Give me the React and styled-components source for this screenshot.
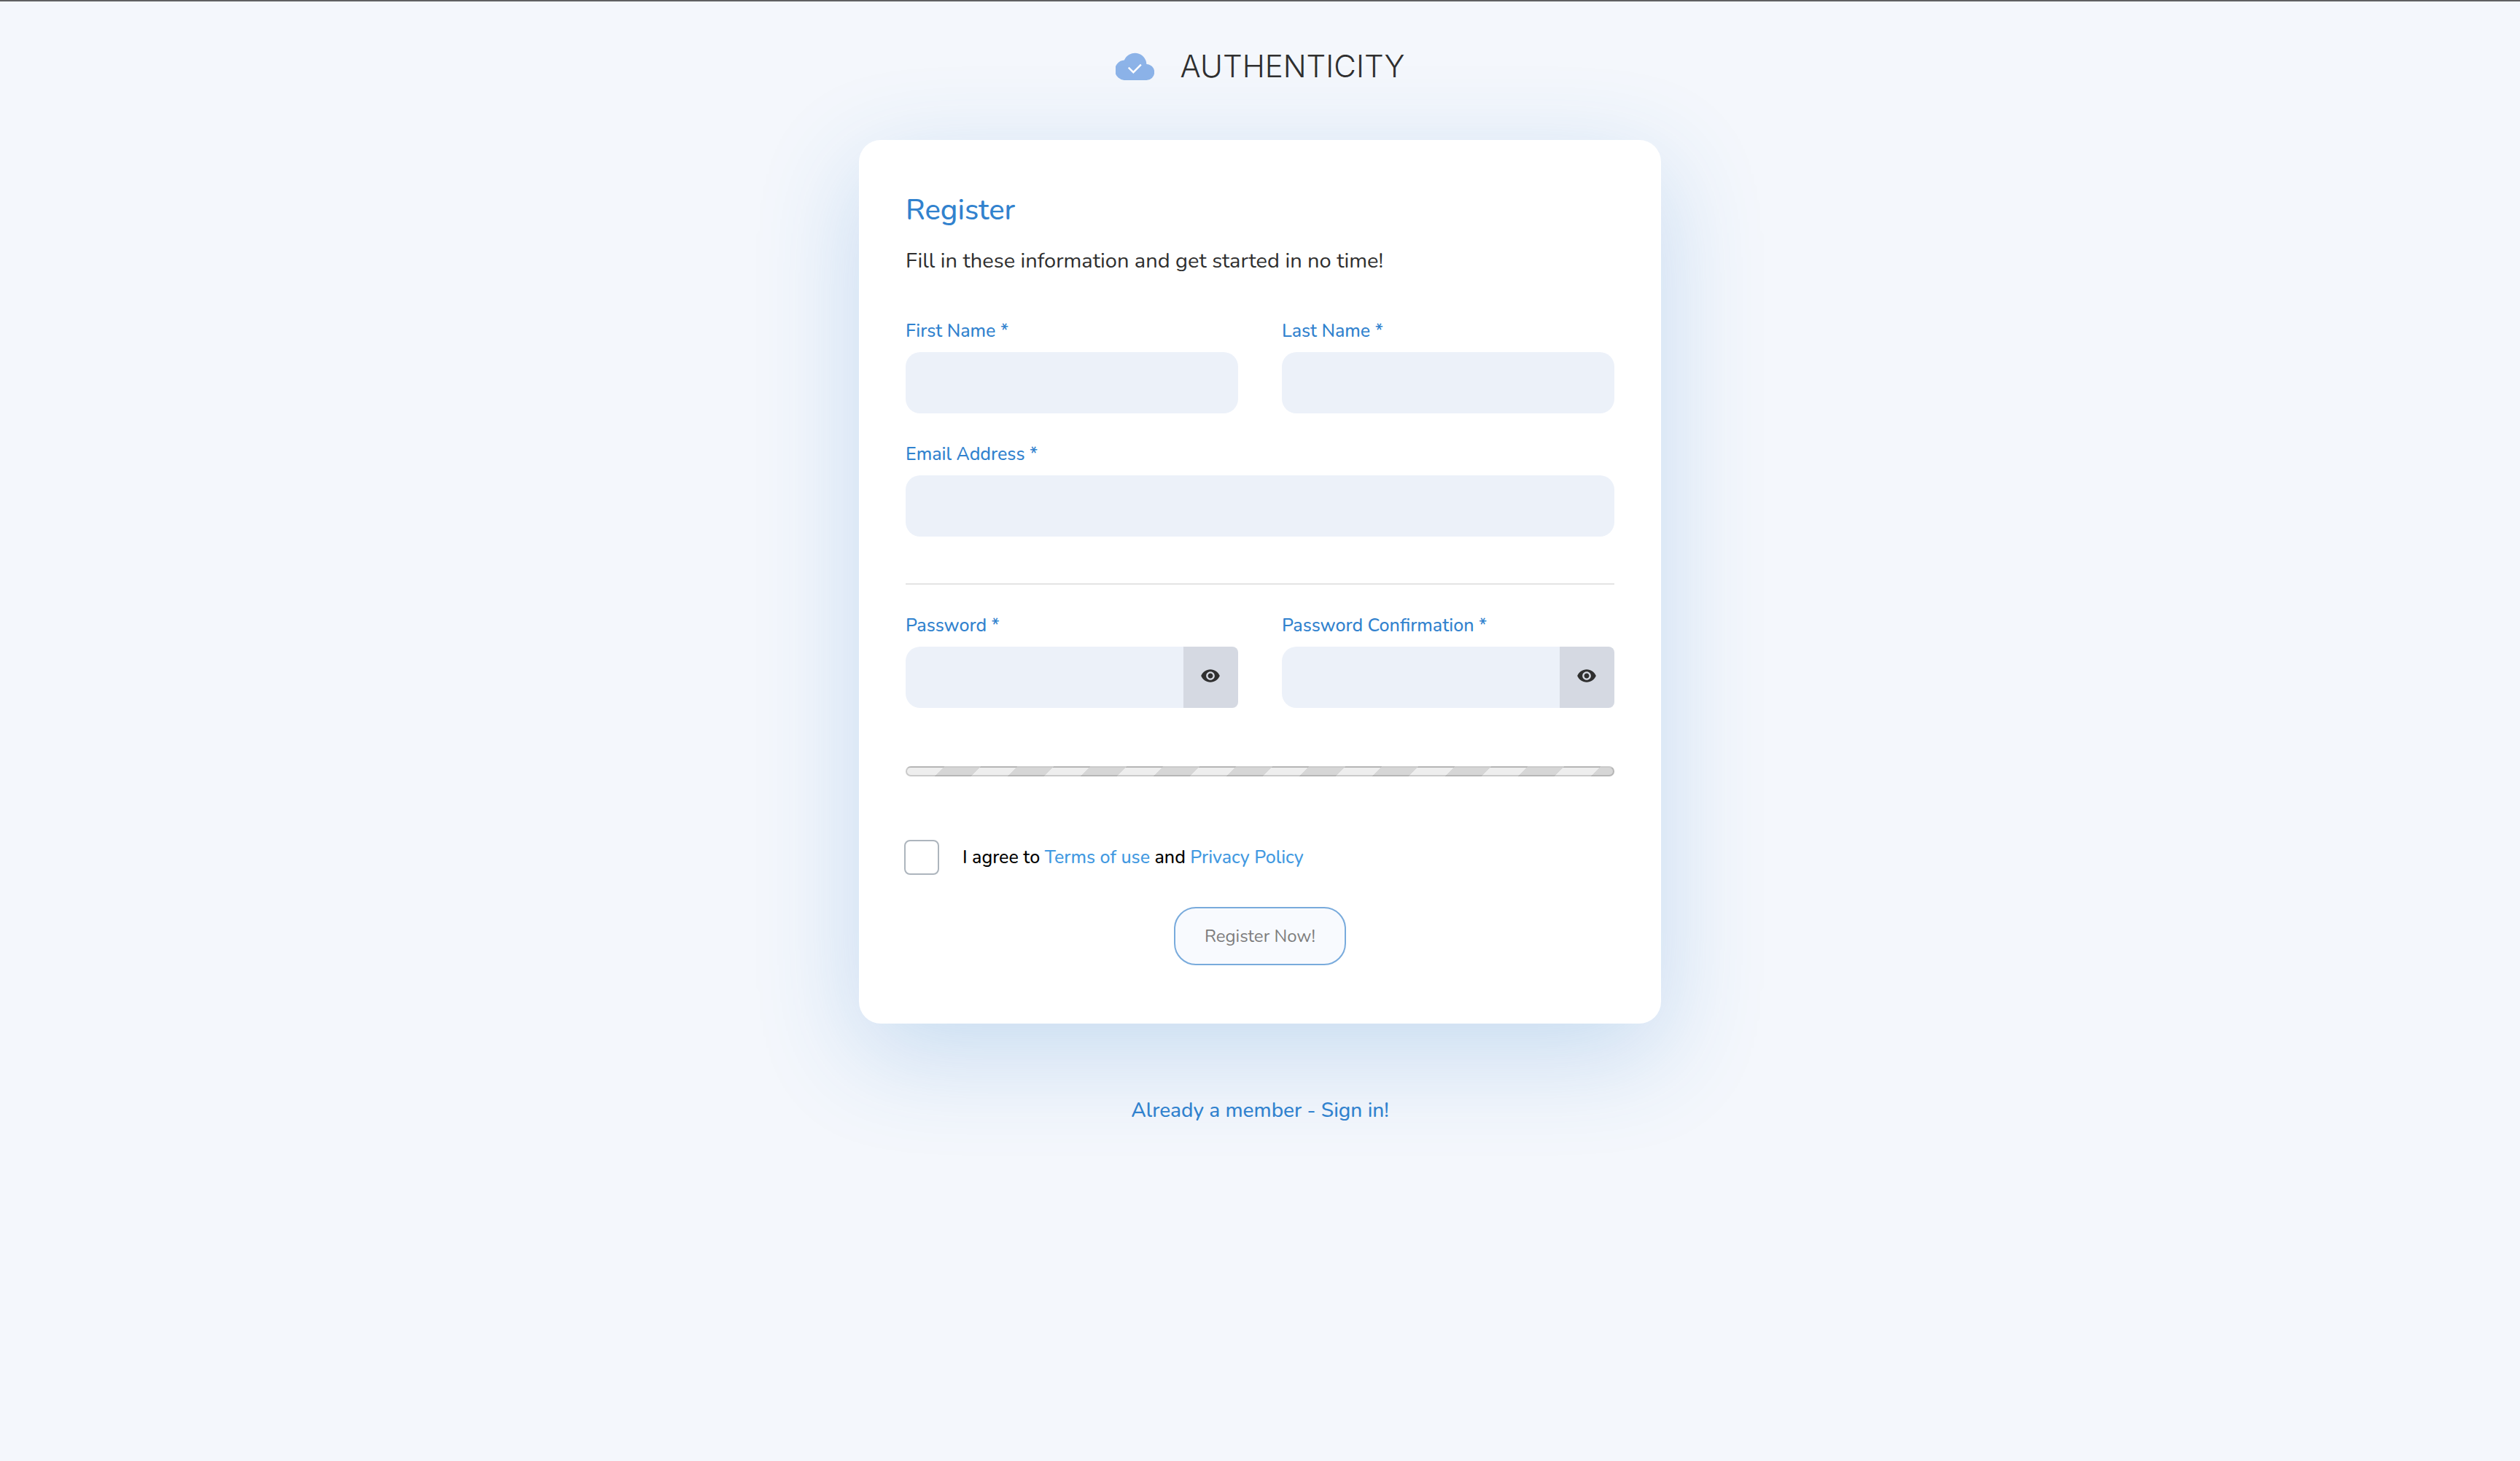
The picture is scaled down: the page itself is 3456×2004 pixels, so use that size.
import React, { useId, useState } from "react";
import styled, { createGlobalStyle } from "styled-components";
import { MdVisibility } from "react-icons/md";

const GlobalStyle = createGlobalStyle`
  *, *::before, *::after { box-sizing: border-box; }
  body {
    margin: 0;
    background: #f4f7fc;
    color: #2f2f2f;
    font-family: Nunito, "Open Sans", "Noto Sans", sans-serif;
  }
`;

const Page = styled.div`
  display: flex;
  flex-direction: column;
  align-items: center;
  min-height: 100vh;
  border-top: 2px solid #5f6062;
`;

const Header = styled.header`
  padding: 64px 24px 76px;
`;

const Brand = styled.a`
  display: flex;
  align-items: center;
  gap: 36px;
  height: 50px;
  color: #2f2f2f;
  text-decoration: none;
`;

const CloudMark = styled.svg`
  flex: none;
  width: 53px;
  height: 38px;
`;

const BrandName = styled.span`
  font-family: Inter, "Open Sans", sans-serif;
  font-size: 42px;
  font-weight: 300;
  line-height: 50px;
`;

const Card = styled.main`
  width: 100%;
  max-width: 1100px;
  padding: 64px 64px 80px;
  border-radius: 30px;
  background: #fff;
  box-shadow: 0 40px 140px rgba(49, 130, 206, 0.24);
`;

const Title = styled.h1`
  margin: 0 0 16px;
  color: #3182ce;
  font-size: 40px;
  font-weight: 500;
  line-height: 64px;
`;

const Lead = styled.p`
  margin: 0;
  font-size: 29px;
  line-height: 44px;
`;

const Form = styled.form`
  display: flex;
  flex-direction: column;
  margin-top: 53px;
`;

const FieldGrid = styled.div`
  display: grid;
  grid-template-columns: repeat(${(p) => p.$columns}, minmax(0, 1fr));
  gap: 60px;
  margin-bottom: ${(p) => p.$after}px;
`;

const FieldBox = styled.div`
  display: flex;
  flex-direction: column;
  gap: 8px;
`;

const FieldLabel = styled.label`
  color: #3182ce;
  font-size: 25px;
  font-weight: 500;
  line-height: 42px;
`;

const InputGroup = styled.div`
  display: flex;
  height: 84px;
`;

const Input = styled.input`
  flex: 1;
  min-width: 0;
  padding: 0 24px;
  border: 0;
  border-radius: ${(p) => (p.$joined ? "20px 0 0 20px" : "20px")};
  background: #ecf1f9;
  color: inherit;
  font: inherit;
  font-size: 26px;
`;

const RevealButton = styled.button`
  display: flex;
  align-items: center;
  justify-content: center;
  width: 75px;
  padding: 0 2px 4px 0;
  border: 0;
  border-radius: 0 8px 8px 0;
  background: #d5d9e2;
  color: #2f2f2f;
  font-size: 28px;
  cursor: pointer;
`;

const Divider = styled.hr`
  width: 100%;
  height: 2px;
  margin: 0 0 35px;
  border: 0;
  background: #e4e4e4;
`;

const StrengthBar = styled.progress`
  appearance: none;
  display: block;
  width: 100%;
  height: 14px;
  margin-bottom: 87px;
  border: 2px solid rgba(0, 0, 0, 0.15);
  border-radius: 8px;
  background-color: #eee;
  background-image: linear-gradient(
    135deg,
    transparent 33%,
    rgba(0, 0, 0, 0.1) 33%,
    rgba(0, 0, 0, 0.1) 66%,
    transparent 66%
  );
  background-size: 100px 50px;

  &::-webkit-progress-bar {
    background: transparent;
  }
`;

const Consent = styled.div`
  display: flex;
  align-items: center;
  gap: 32px;
  margin: 0 0 44px -2px;
`;

const Checkbox = styled.input`
  appearance: none;
  flex: none;
  width: 48px;
  height: 48px;
  margin: 0;
  border: 2px solid #adb5bd;
  border-radius: 8px;
  background: #fff;

  &:checked {
    background: #3182ce;
  }
`;

const ConsentLabel = styled.label`
  color: #000;
  font-size: 25px;
  font-weight: 500;
  line-height: 42px;
`;

const TextLink = styled.a`
  color: #4299e1;
  text-decoration: none;
`;

const SubmitButton = styled.button`
  align-self: center;
  height: 80px;
  padding: 0 40px;
  border: 2px solid #79abdc;
  border-radius: 30px;
  background: #f8fafe;
  color: #7d7d7d;
  font-family: inherit;
  font-size: 24px;
  line-height: 40px;
`;

const Footer = styled.footer`
  padding: 99px 24px 64px;
`;

const SignInLink = styled.a`
  color: #3182ce;
  font-size: 28px;
  font-weight: 500;
  line-height: 40px;
  text-decoration: none;
`;

function Cloud() {
  return (
    <CloudMark viewBox="0 0 53 38" aria-hidden="true">
      <path
        d="M13.6 38A13.6 13.6 0 0 1 11.8 10.6A15.9 15.9 0 0 1 42.4 16A11 11 0 0 1 42 38Z"
        fill="#8cb3e8"
      />
      <path d="M17.7 20.7L24.3 27.2L34.8 16.6" fill="none" stroke="#fff" strokeWidth="2.4" />
    </CloudMark>
  );
}

function Field({ label, type = "text" }) {
  const id = useId();
  return (
    <FieldBox>
      <FieldLabel htmlFor={id}>{label} *</FieldLabel>
      <InputGroup>
        <Input id={id} type={type} required />
      </InputGroup>
    </FieldBox>
  );
}

function PasswordField({ label }) {
  const id = useId();
  const [visible, setVisible] = useState(false);
  return (
    <FieldBox>
      <FieldLabel htmlFor={id}>{label} *</FieldLabel>
      <InputGroup>
        <Input id={id} type={visible ? "text" : "password"} required $joined />
        <RevealButton
          type="button"
          aria-label={`Show ${label}`}
          aria-pressed={visible}
          onClick={() => setVisible(!visible)}
        >
          <MdVisibility />
        </RevealButton>
      </InputGroup>
    </FieldBox>
  );
}

export default function App() {
  return (
    <>
      <GlobalStyle />
      <Page>
        <Header>
          <Brand href="#">
            <Cloud />
            <BrandName>AUTHENTICITY</BrandName>
          </Brand>
        </Header>
        <Card>
          <Title>Register</Title>
          <Lead>Fill in these information and get started in no time!</Lead>
          <Form onSubmit={(e) => e.preventDefault()}>
            <FieldGrid $columns={2} $after={35}>
              <Field label="First Name" />
              <Field label="Last Name" />
            </FieldGrid>
            <FieldGrid $columns={1} $after={64}>
              <Field label="Email Address" type="email" />
            </FieldGrid>
            <Divider />
            <FieldGrid $columns={2} $after={80}>
              <PasswordField label="Password" />
              <PasswordField label="Password Confirmation" />
            </FieldGrid>
            <StrengthBar value={0} max={100} aria-label="Password strength" />
            <Consent>
              <Checkbox id="consent" type="checkbox" />
              <ConsentLabel htmlFor="consent">
                I agree to <TextLink href="#terms">Terms of use</TextLink> and{" "}
                <TextLink href="#privacy">Privacy Policy</TextLink>
              </ConsentLabel>
            </Consent>
            <SubmitButton type="submit" disabled>
              Register Now!
            </SubmitButton>
          </Form>
        </Card>
        <Footer>
          <SignInLink href="#signin">Already a member - Sign in!</SignInLink>
        </Footer>
      </Page>
    </>
  );
}
